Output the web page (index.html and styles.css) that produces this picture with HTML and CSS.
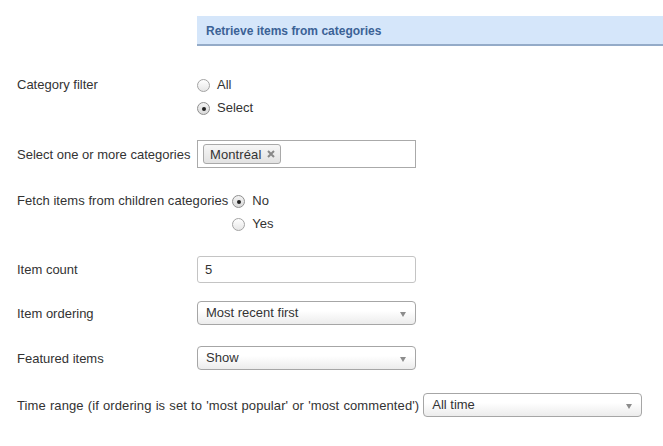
FILE: index.html
```html
<!DOCTYPE html>
<html lang="en">
<head>
    <meta charset="UTF-8">
    <title>Retrieve items from categories</title>
    <link rel="stylesheet" href="styles.css">
</head>
<body>

    <div class="form">
        <div class="secao">Retrieve items from categories</div>

        <div class="row row-radios">
            <label class="rotulo">Category filter</label>
            <div class="radios">
                <label class="opcao"><span class="radio"></span>All</label>
                <label class="opcao"><span class="radio marcado"></span>Select</label>
            </div>
        </div>

        <div class="row">
            <label class="rotulo">Select one or more categories</label>
            <div class="campo multi">
                <span class="tag">Montréal
                    <svg class="fechar" width="8" height="8" viewBox="0 0 8 8"><path d="M1 1 L7 7 M7 1 L1 7" stroke="#888" stroke-width="2"/></svg>
                </span>
            </div>
        </div>

        <div class="row row-radios">
            <label class="rotulo filhos">Fetch items from children categories</label>
            <div class="radios">
                <label class="opcao"><span class="radio marcado"></span>No</label>
                <label class="opcao"><span class="radio"></span>Yes</label>
            </div>
        </div>

        <div class="row contagem">
            <label class="rotulo">Item count</label>
            <div class="campo texto">5</div>
        </div>

        <div class="row">
            <label class="rotulo">Item ordering</label>
            <div class="campo select">Most recent first<span class="seta"></span></div>
        </div>

        <div class="row destaque">
            <label class="rotulo">Featured items</label>
            <div class="campo select">Show<span class="seta"></span></div>
        </div>

        <div class="row">
            <label class="rotulo periodo">Time range (if ordering is set to 'most popular' or 'most commented')</label>
            <div class="campo select">All time<span class="seta"></span></div>
        </div>
    </div>

</body>
</html>
```

FILE: styles.css
```css
body {
    font-family: "Liberation Sans", Arial, sans-serif;
    font-size: 13px;
    color: #333333;
    background-color: #ffffff;
    margin: 0;
    padding: 0;
}

.form {
    padding: 16px 0 0 17px;
}

.secao {
    margin-left: 180px;
    height: 28px;
    line-height: 30px;
    padding-left: 9px;
    background-color: #d5e6fa;
    border-bottom: 2px solid #94abc8;
    color: #3b6296;
    font-size: 12px;
    font-weight: bold;
    margin-bottom: 27px;
}

.row {
    display: flex;
    align-items: center;
    margin-bottom: 21px;
}

.row-radios {
    align-items: flex-start;
}

.contagem {
    margin-bottom: 18px;
}

.destaque {
    margin-top: 1px;
    margin-bottom: 23px;
}

.rotulo {
    min-width: 176px;
    margin-right: 4px;
    line-height: 23px;
    white-space: nowrap;
}

.filhos {
    letter-spacing: 0.05px;
}

.periodo {
    letter-spacing: 0.1px;
    word-spacing: 0.4px;
}

.radios {
    display: flex;
    flex-direction: column;
}

.opcao {
    display: flex;
    align-items: center;
    height: 23px;
}

.radio {
    width: 11px;
    height: 11px;
    border: 1px solid #a3a3a3;
    border-radius: 50%;
    background: linear-gradient(#ffffff, #e6e6e6);
    margin-right: 7px;
    margin-top: 2px;
    position: relative;
}

.radio.marcado {
    background: linear-gradient(#f3f3f3, #d9d9d9);
    border-color: #8f8f8f;
}

.radio.marcado::after {
    content: "";
    position: absolute;
    width: 4px;
    height: 4px;
    border-radius: 50%;
    background-color: #222222;
    left: 3.5px;
    top: 3.5px;
}

.campo {
    width: 219px;
    box-sizing: border-box;
    border: 1px solid #b4b4b4;
}

.multi {
    height: 28px;
    padding: 3px 5px;
    border-color: #aaaaaa;
}

.tag {
    display: inline-flex;
    align-items: center;
    height: 20px;
    box-sizing: border-box;
    padding: 0 5px 0 6px;
    border: 1px solid #a9a9a9;
    border-radius: 3px;
    background: linear-gradient(#f6f6f6, #e2e2e2);
    color: #333333;
    letter-spacing: 0.1px;
}

.fechar {
    margin-left: 6px;
}

.texto {
    height: 27px;
    line-height: 25px;
    padding-left: 7px;
    border-color: #c4c4c4;
    border-radius: 3px;
}

.select {
    height: 24px;
    line-height: 22px;
    padding-left: 8px;
    border-color: #a6a6a6;
    border-radius: 4px;
    background: linear-gradient(#ffffff 40%, #ececec);
    position: relative;
}

.seta {
    position: absolute;
    right: 9px;
    top: 10px;
    border-left: 3.5px solid transparent;
    border-right: 3.5px solid transparent;
    border-top: 5px solid #8c8c8c;
}
```
